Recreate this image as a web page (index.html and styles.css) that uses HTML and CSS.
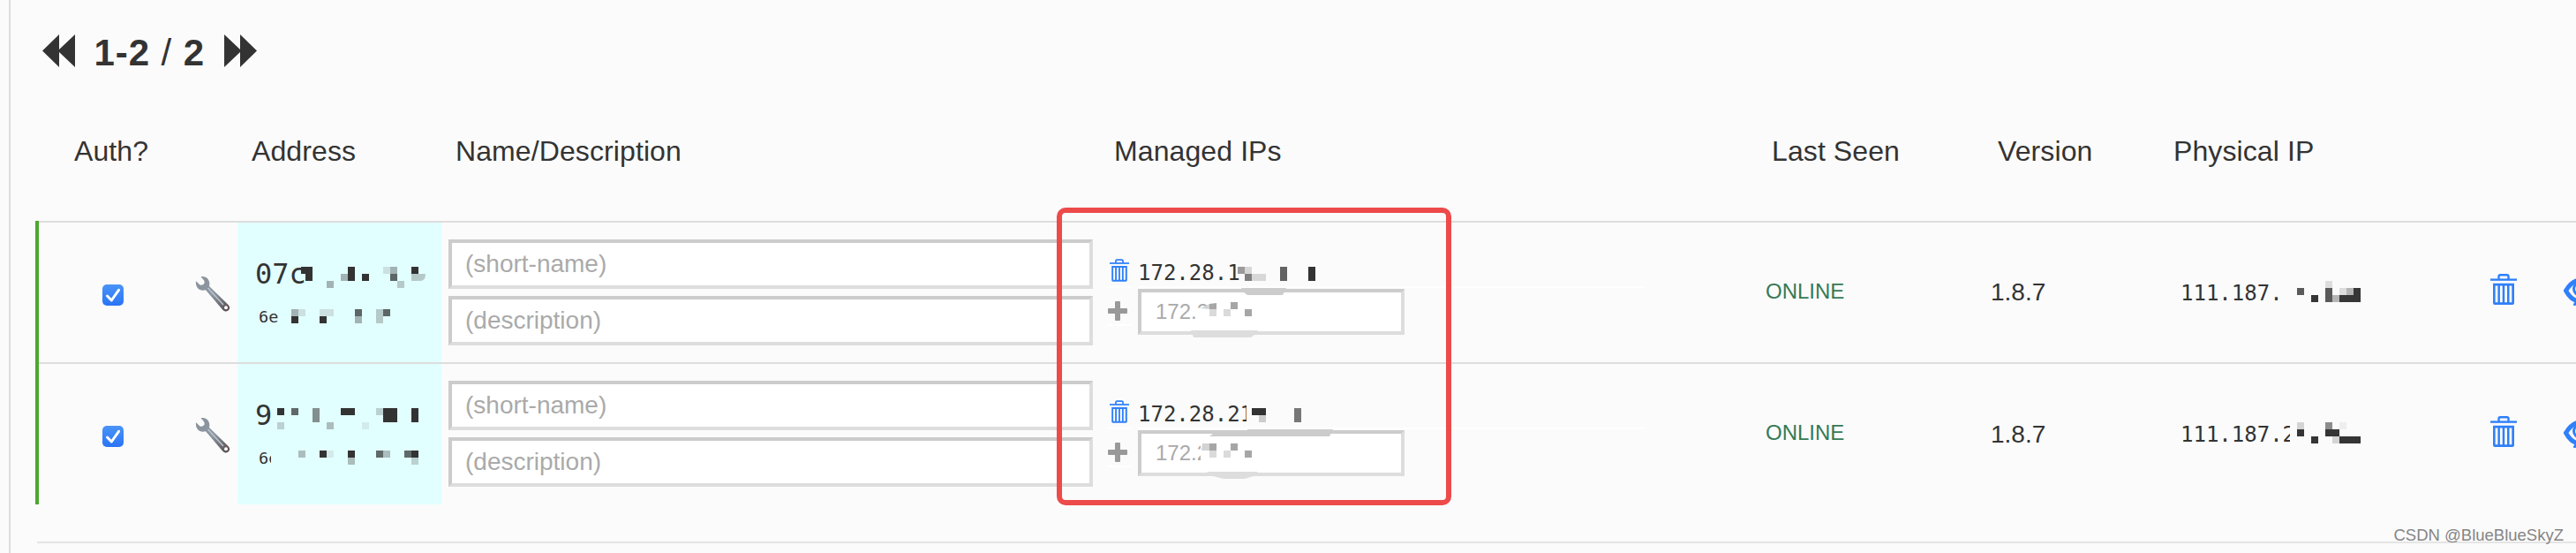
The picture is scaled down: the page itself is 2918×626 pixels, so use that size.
FILE: index.html
```html
<!DOCTYPE html>
<html lang="en">
<head>
  <meta charset="UTF-8">
  <meta name="viewport" content="width=device-width, initial-scale=1.0">
  <title>Members</title>
  <link rel="stylesheet" href="styles.css">
</head>
<body>
  <svg class="symbols" width="0" height="0">
    <symbol id="trash" viewBox="0 0 30 35">
      <path d="M9.5 6V3q0-1.8 1.8-1.8h7.4q1.8 0 1.8 1.8v3" fill="none" stroke="currentColor" stroke-width="2.4"/>
      <path d="M0 5.4h30v2.4H0z" fill="currentColor"/>
      <path fill-rule="evenodd" fill="currentColor" d="M3 10.7h24V33q0 2-2 2H5q-2 0-2-2zM5.6 13.4v18.9h2.8V13.4zM10.9 13.4v18.9h2.8V13.4zM16.2 13.4v18.9H19V13.4zM21.5 13.4v18.9h2.8V13.4z"/>
    </symbol>
    <symbol id="plus" viewBox="0 0 22 22">
      <path fill="currentColor" d="M9 0h4q1 0 1 1v7h7q1 0 1 1v4q0 1-1 1h-7v7q0 1-1 1H9q-1 0-1-1v-7H1q-1 0-1-1V9q0-1 1-1h7V1q0-1 1-1z"/>
    </symbol>
    <symbol id="eye" viewBox="0 0 40 32">
      <path d="M36 15Q28 3 19 3T2.500 15Q9 27 19 27T36 15z" fill="none" stroke="currentColor" stroke-width="5"/>
      <circle cx="19" cy="13" r="7.500" fill="none" stroke="currentColor" stroke-width="3"/>
      <path d="M12 32L28 0" stroke="currentColor" stroke-width="3"/>
    </symbol>
    <symbol id="wrench" viewBox="0 0 40 41">
      <linearGradient id="steel" x1="0" y1="0" x2="1" y2="1">
        <stop offset="0" stop-color="#89929b"/>
        <stop offset=".5" stop-color="#8d97a1"/>
        <stop offset="1" stop-color="#54474a"/>
      </linearGradient>
      <path fill="url(#steel)" d="M6.500 1.200C11 0 15.500 3 16.200 7.500Q16.500 10 16 12L38 33.500Q40.500 37 37.500 39.500Q34 42 31 38.500L12 16.300Q6 18 2.500 13.500Q.3 10 1 6.200L5.500 10.500Q8.500 11.500 10.300 9Q11.200 7 9.800 5z"/>
      <path d="M14.500 14L32 33" stroke="#b9c5d0" stroke-width="1.500"/>
      <circle cx="35" cy="36.300" r="2" fill="#fbfbfb"/>
    </symbol>
    <symbol id="check" viewBox="0 0 24 24">
      <linearGradient id="blue" x1="0" y1="0" x2="0" y2="1">
        <stop offset="0" stop-color="#4a94f8"/>
        <stop offset="1" stop-color="#2a74f6"/>
      </linearGradient>
      <rect width="24" height="24" rx="5" fill="url(#blue)"/>
      <path d="M5.500 13L10.300 18L18.500 6.300" fill="none" stroke="#fff" stroke-width="3" stroke-linecap="round" stroke-linejoin="round"/>
    </symbol>
  </svg>

  <div class="page">
    <div class="pager">
      <svg width="37" height="37" viewBox="0 0 37 37"><path fill="#333" d="M0 18.500L19 0v17L37 0v37L19 20v17z"/></svg>
      <span class="count"><b>1-2</b> / <b>2</b></span>
      <svg width="37" height="37" viewBox="0 0 37 37"><path fill="#333" d="M37 18.500L18 0v17L0 0v37L18 20v17z"/></svg>
    </div>

    <table class="members">
      <colgroup>
        <col class="c-auth"><col class="c-tool"><col class="c-address"><col class="c-name"><col class="c-ips">
        <col class="c-seen"><col class="c-version"><col class="c-physical"><col class="c-trash"><col class="c-hide">
      </colgroup>
      <thead>
        <tr>
          <th class="auth">Auth?</th>
          <th></th>
          <th>Address</th>
          <th>Name/Description</th>
          <th>Managed IPs</th>
          <th>Last Seen</th>
          <th>Version</th>
          <th>Physical IP</th>
          <th></th>
          <th></th>
        </tr>
      </thead>
      <tbody>
        <tr>
          <td class="auth"><svg width="24" height="24"><use href="#check"/></svg></td>
          <td class="tool"><svg width="40" height="41"><use href="#wrench"/></svg></td>
          <td class="address">
            <div class="node">07c</div>
            <div class="mac">6e</div>
            <svg class="mask" width="231" height="158" viewBox="269 252 231 158">
              <path fill="#333" d="M341 302h13v16h-8v-8h-5zM394 302h8v16h-8zM410 310h8v8h-8zM466 302h8v8h-8zM330 358h8v8h-8zM362 358h8v8h-8z"/>
              <path fill="#a2b3b3" d="M370 318h8v8h-8zM386 310h8v8h-8zM442 302h8v8h-8zM330 350h8v8h-8zM402 358h8v8h-8z"/>
              <path fill="#cbe0e0" d="M434 302h8v8h-8zM338 350h8v8h-8zM362 350h8v8h-8zM370 350h8v8h-8z"/>
              <path fill="#b5c9c9" d="M450 318h8v8h-8zM466 310h16q0 8-6 8h-10zM426 350h8v16h-8z"/>
              <path fill="#5c6666" d="M442 310h8v8h-8zM402 350h8v8h-8zM434 350h8v8h-8z"/>
            </svg>
          </td>
          <td class="name">
            <input type="text" placeholder="(short-name)">
            <input type="text" placeholder="(description)">
          </td>
          <td class="ips">
            <div class="ip-list">
              <div class="icon"><svg class="blue" width="22" height="26"><use href="#trash"/></svg></div>
              <div class="ip">172.28.1</div>
              <div class="icon add"><svg width="22" height="22"><use href="#plus"/></svg></div>
              <input type="text" placeholder="172.2">
            </div>
            <svg class="mask" width="745" height="158" viewBox="1246 252 745 158">
              <path fill="#9b9b9b" d="M1402 302h8v8h-8z"/>
              <path fill="#d7d7d7" d="M1410 302h8v8h-8zM1418 310h16v8h-16z"/>
              <path fill="#7f7f7f" d="M1410 310h8v8h-8z"/>
              <path fill="#636363" d="M1450 302h8v16h-8z"/>
              <path fill="#333" d="M1482 302h8v16h-8z"/>
              <path fill="#ccc" d="M1406 326h51l-4 8h-40l-4-3z"/>
              <path fill="#fff" d="M1354.500 353l3-4h12v14h-15z"/>
              <path fill="#d3d3d3" d="M1360 349l10-5v6z"/>
              <path fill="#a6a6a6" d="M1370 344l8-1v7h-8zM1394 342h8v8h-8zM1410 350h8v8h-8z"/>
              <path fill="#dadada" d="M1370 350h8v8h-8zM1386 350h8v8h-8z"/>
              <path fill="#ddd" d="M1349 374h76l-4 5-4 3h-65z"/>
            </svg>
          </td>
          <td class="seen">ONLINE</td>
          <td class="version">1.8.7</td>
          <td class="physical">111.187.
            <svg class="mask" width="354" height="158" viewBox="2446 252 354 158">
              <path fill="#5a5a5a" d="M2602 326h8v8h-8zM2634 326h8v16h-8z"/>
              <path fill="#ddd" d="M2634 318h8v8h-8zM2650 326h8v8h-8z"/>
              <path fill="#b5b5b5" d="M2642 334h8v8h-8zM2658 326h8v8h-8z"/>
              <path fill="#363636" d="M2618 334h8v8h-8zM2650 334h16v-8h8v16h-24z"/>
            </svg>
          </td>
          <td class="trash"><svg class="blue" width="30" height="35"><use href="#trash"/></svg></td>
          <td class="hide"><svg class="blue" width="40" height="32"><use href="#eye"/></svg></td>
        </tr>
        <tr>
          <td class="auth"><svg width="24" height="24"><use href="#check"/></svg></td>
          <td class="tool"><svg width="40" height="41"><use href="#wrench"/></svg></td>
          <td class="address">
            <div class="node">9</div>
            <div class="mac">6e</div>
            <svg class="mask" width="231" height="158" viewBox="269 412 231 158">
              <path fill="#e2ffff" d="M307 508h8v18h-8z"/>
              <path fill="#333" d="M314 462h8v8h-8zM386 462h16v8h-16zM434 462h16v16h-16zM466 462h8v16h-8zM362 510h8v8h-8zM394 510h8v8h-8zM466 510h8v8h-8z"/>
              <path fill="#bbd0d0" d="M314 478h8v8h-8zM426 462h8v8h-8zM466 518h8v8h-8z"/>
              <path fill="#5f6969" d="M330 462h8v8h-8zM426 510h8v8h-8zM458 510h8v8h-8z"/>
              <path fill="#828f8f" d="M354 462h8v16h-8z"/>
              <path fill="#abbdbd" d="M370 478h8v8h-8zM338 510h8v8h-8zM394 518h8v8h-8zM434 510h8v8h-8z"/>
              <path fill="#d2eaea" d="M410 478h8v8h-8zM370 510h8v8h-8z"/>
            </svg>
          </td>
          <td class="name">
            <input type="text" placeholder="(short-name)">
            <input type="text" placeholder="(description)">
          </td>
          <td class="ips">
            <div class="ip-list">
              <div class="icon"><svg class="blue" width="22" height="26"><use href="#trash"/></svg></div>
              <div class="ip">172.28.21</div>
              <div class="icon add"><svg width="22" height="22"><use href="#plus"/></svg></div>
              <input type="text" placeholder="172.2">
            </div>
            <svg class="mask" width="745" height="158" viewBox="1246 412 745 158">
              <path fill="#fbfbfb" d="M1412 458h8v22h-8z"/>
              <path fill="#333" d="M1418 462h16v8h-16z"/>
              <path fill="#ccc" d="M1426 470h8v8h-8zM1413 486h97l-4 8h-136l4-3h39z"/>
              <path fill="#777" d="M1466 462h8v16h-8z"/>
              <path fill="#fff" d="M1360 502h9v22h-9z"/>
              <path fill="#d3d3d3" d="M1362 502h8v8h-9z"/>
              <path fill="#a6a6a6" d="M1370 502h8v8h-8zM1394 502h8v8h-8zM1410 510h8v8h-8z"/>
              <path fill="#dadada" d="M1370 510h8v8h-8zM1386 510h8v8h-8z"/>
              <path fill="#ddd" d="M1367 534h58l-5 5-10 3h-24l-12-3z"/>
            </svg>
          </td>
          <td class="seen">ONLINE</td>
          <td class="version">1.8.7</td>
          <td class="physical">111.187.2
            <svg class="mask" width="354" height="158" viewBox="2446 412 354 158">
              <path fill="#fbfbfb" d="M2594 478h8v26h-8zM2588 487l6-3v7l-5 2z"/>
              <path fill="#d4d4d4" d="M2602 478h8v8h-8zM2642 494h8v8h-8z"/>
              <path fill="#eee" d="M2650 478h8v8h-8z"/>
              <path fill="#8c8c8c" d="M2634 478h8v8h-8z"/>
              <path fill="#353535" d="M2602 486h8v8h-8zM2618 494h8v8h-8zM2634 486h16v8h-16zM2650 494h24v8h-24z"/>
            </svg>
          </td>
          <td class="trash"><svg class="blue" width="30" height="35"><use href="#trash"/></svg></td>
          <td class="hide"><svg class="blue" width="40" height="32"><use href="#eye"/></svg></td>
        </tr>
      </tbody>
    </table>
    <hr>
  </div>

  <div class="highlight"></div>
  <div class="watermark">CSDN @BlueBlueSkyZ</div>
</body>
</html>
```
FILE: styles.css
```css
* {
  box-sizing: border-box;
}

body {
  margin: 0;
  height: 626px;
  overflow: hidden;
  position: relative;
  background-color: #fbfbfb;
  color: #333;
  font-family: "Liberation Sans", Arial, sans-serif;
}

svg {
  display: block;
}

.symbols {
  position: absolute;
}

.blue {
  color: #2f80fa;
}

.page {
  margin-left: 10px;
  height: 626px;
  padding: 34px 0 0 28px;
  border-left: 2px solid #ddd;
}

/* pager */
.pager {
  display: flex;
  align-items: center;
  height: 48px;
  padding-left: 7.500px;
}

.count {
  margin: 4px 22px 0 22px;
  font-size: 42px;
  line-height: 48px;
  letter-spacing: 0.9px;
}

/* members table */
.members {
  width: 2910px;
  margin-top: 10px;
  table-layout: fixed;
  border-collapse: separate;
  border-spacing: 0;
}

.pager svg {
  margin-bottom: 1px;
}

.c-auth { width: 169px; }
.c-tool { width: 60px; }
.c-address { width: 231px; }
.c-name { width: 746px; }
.c-ips { width: 745px; }
.c-seen { width: 256px; }
.c-version { width: 199px; }
.c-physical { width: 354px; }
.c-trash { width: 90px; }
.c-hide { width: 60px; }

th {
  height: 158px;
  padding: 0 16px;
  font-size: 32px;
  font-weight: normal;
  letter-spacing: 0.1px;
  text-align: left;
}

th.auth {
  padding: 0 0 0 3px;
  text-align: center;
}

td {
  position: relative;
  height: 160px;
  padding: 0 8px;
  border-top: 2px solid #ddd;
}

tr:last-child td {
  height: 161px;
}

td.auth {
  padding: 7px 0 0 72px;
  border-left: 4px solid #4ca72f;
  border-top: 0;
  background: linear-gradient(#ddd, #ddd) no-repeat 0 0 / 100% 2px;
}

td.tool {
  padding: 2px 0 0 12px;
}

td.address {
  padding: 38px 0 0 20px;
  vertical-align: top;
  background-color: #e2ffff;
  font-family: "DejaVu Sans Mono", monospace;
}

.node {
  font-size: 32px;
  line-height: 40px;
}

.mac {
  padding-left: 4px;
  font-size: 18.500px;
  line-height: 57px;
}

.mask {
  position: absolute;
  left: 0;
  top: 0;
}

input {
  display: block;
  margin: 0;
  border: 4px solid;
  border-color: #ccc #ddd #ddd #ccc;
  background-color: #fff;
  font-family: inherit;
}

input::placeholder {
  color: #aaa;
}

td.name {
  padding-top: 19px;
  vertical-align: top;
}

td.name input {
  width: 730px;
  height: 56px;
  margin-bottom: 8px;
  padding: 0 15px;
  font-size: 28px;
}

td.ips {
  padding-top: 38px;
  vertical-align: top;
}

.ip-list {
  display: grid;
  grid-template-columns: 27px 574px;
  grid-template-rows: 36px auto;
  column-gap: 8px;
}

.icon,
.ip {
  border-bottom: 2px solid #fff;
}

.icon {
  padding: 3px 0 0 3px;
}

.icon.add {
  height: 43px;
  padding: 15px 0 0 1px;
  color: #999;
}

.ip {
  height: 36px;
  font-family: "DejaVu Sans Mono", monospace;
  font-size: 24px;
  line-height: 38px;
}

.ip-list input {
  width: 302px;
  height: 52px;
  margin-top: 1px;
  padding: 0 16px;
  font-size: 24px;
}

td.seen {
  padding: 0 0 3px 9px;
  color: #357a55;
  font-size: 24px;
}

td.version {
  font-size: 28px;
}

td.physical {
  padding: 1px 0 0 24px;
  font-family: "DejaVu Sans Mono", monospace;
  font-size: 24px;
}

td.trash {
  padding: 0 0 7px 21px;
}

td.hide {
  padding: 0 0 2px 14px;
}

hr {
  margin: 42px 0 0 2px;
  border: 0;
  border-top: 2px solid #e5e5e5;
}

/* box drawn over the managed IPs */
.highlight {
  position: absolute;
  left: 1197px;
  top: 235px;
  width: 447px;
  height: 337px;
  border: 6px solid #ed4a4a;
  border-radius: 10px;
}

.watermark {
  position: absolute;
  right: 14px;
  bottom: 8px;
  font-size: 18.500px;
  line-height: 24px;
  color: #858585;
}
```
